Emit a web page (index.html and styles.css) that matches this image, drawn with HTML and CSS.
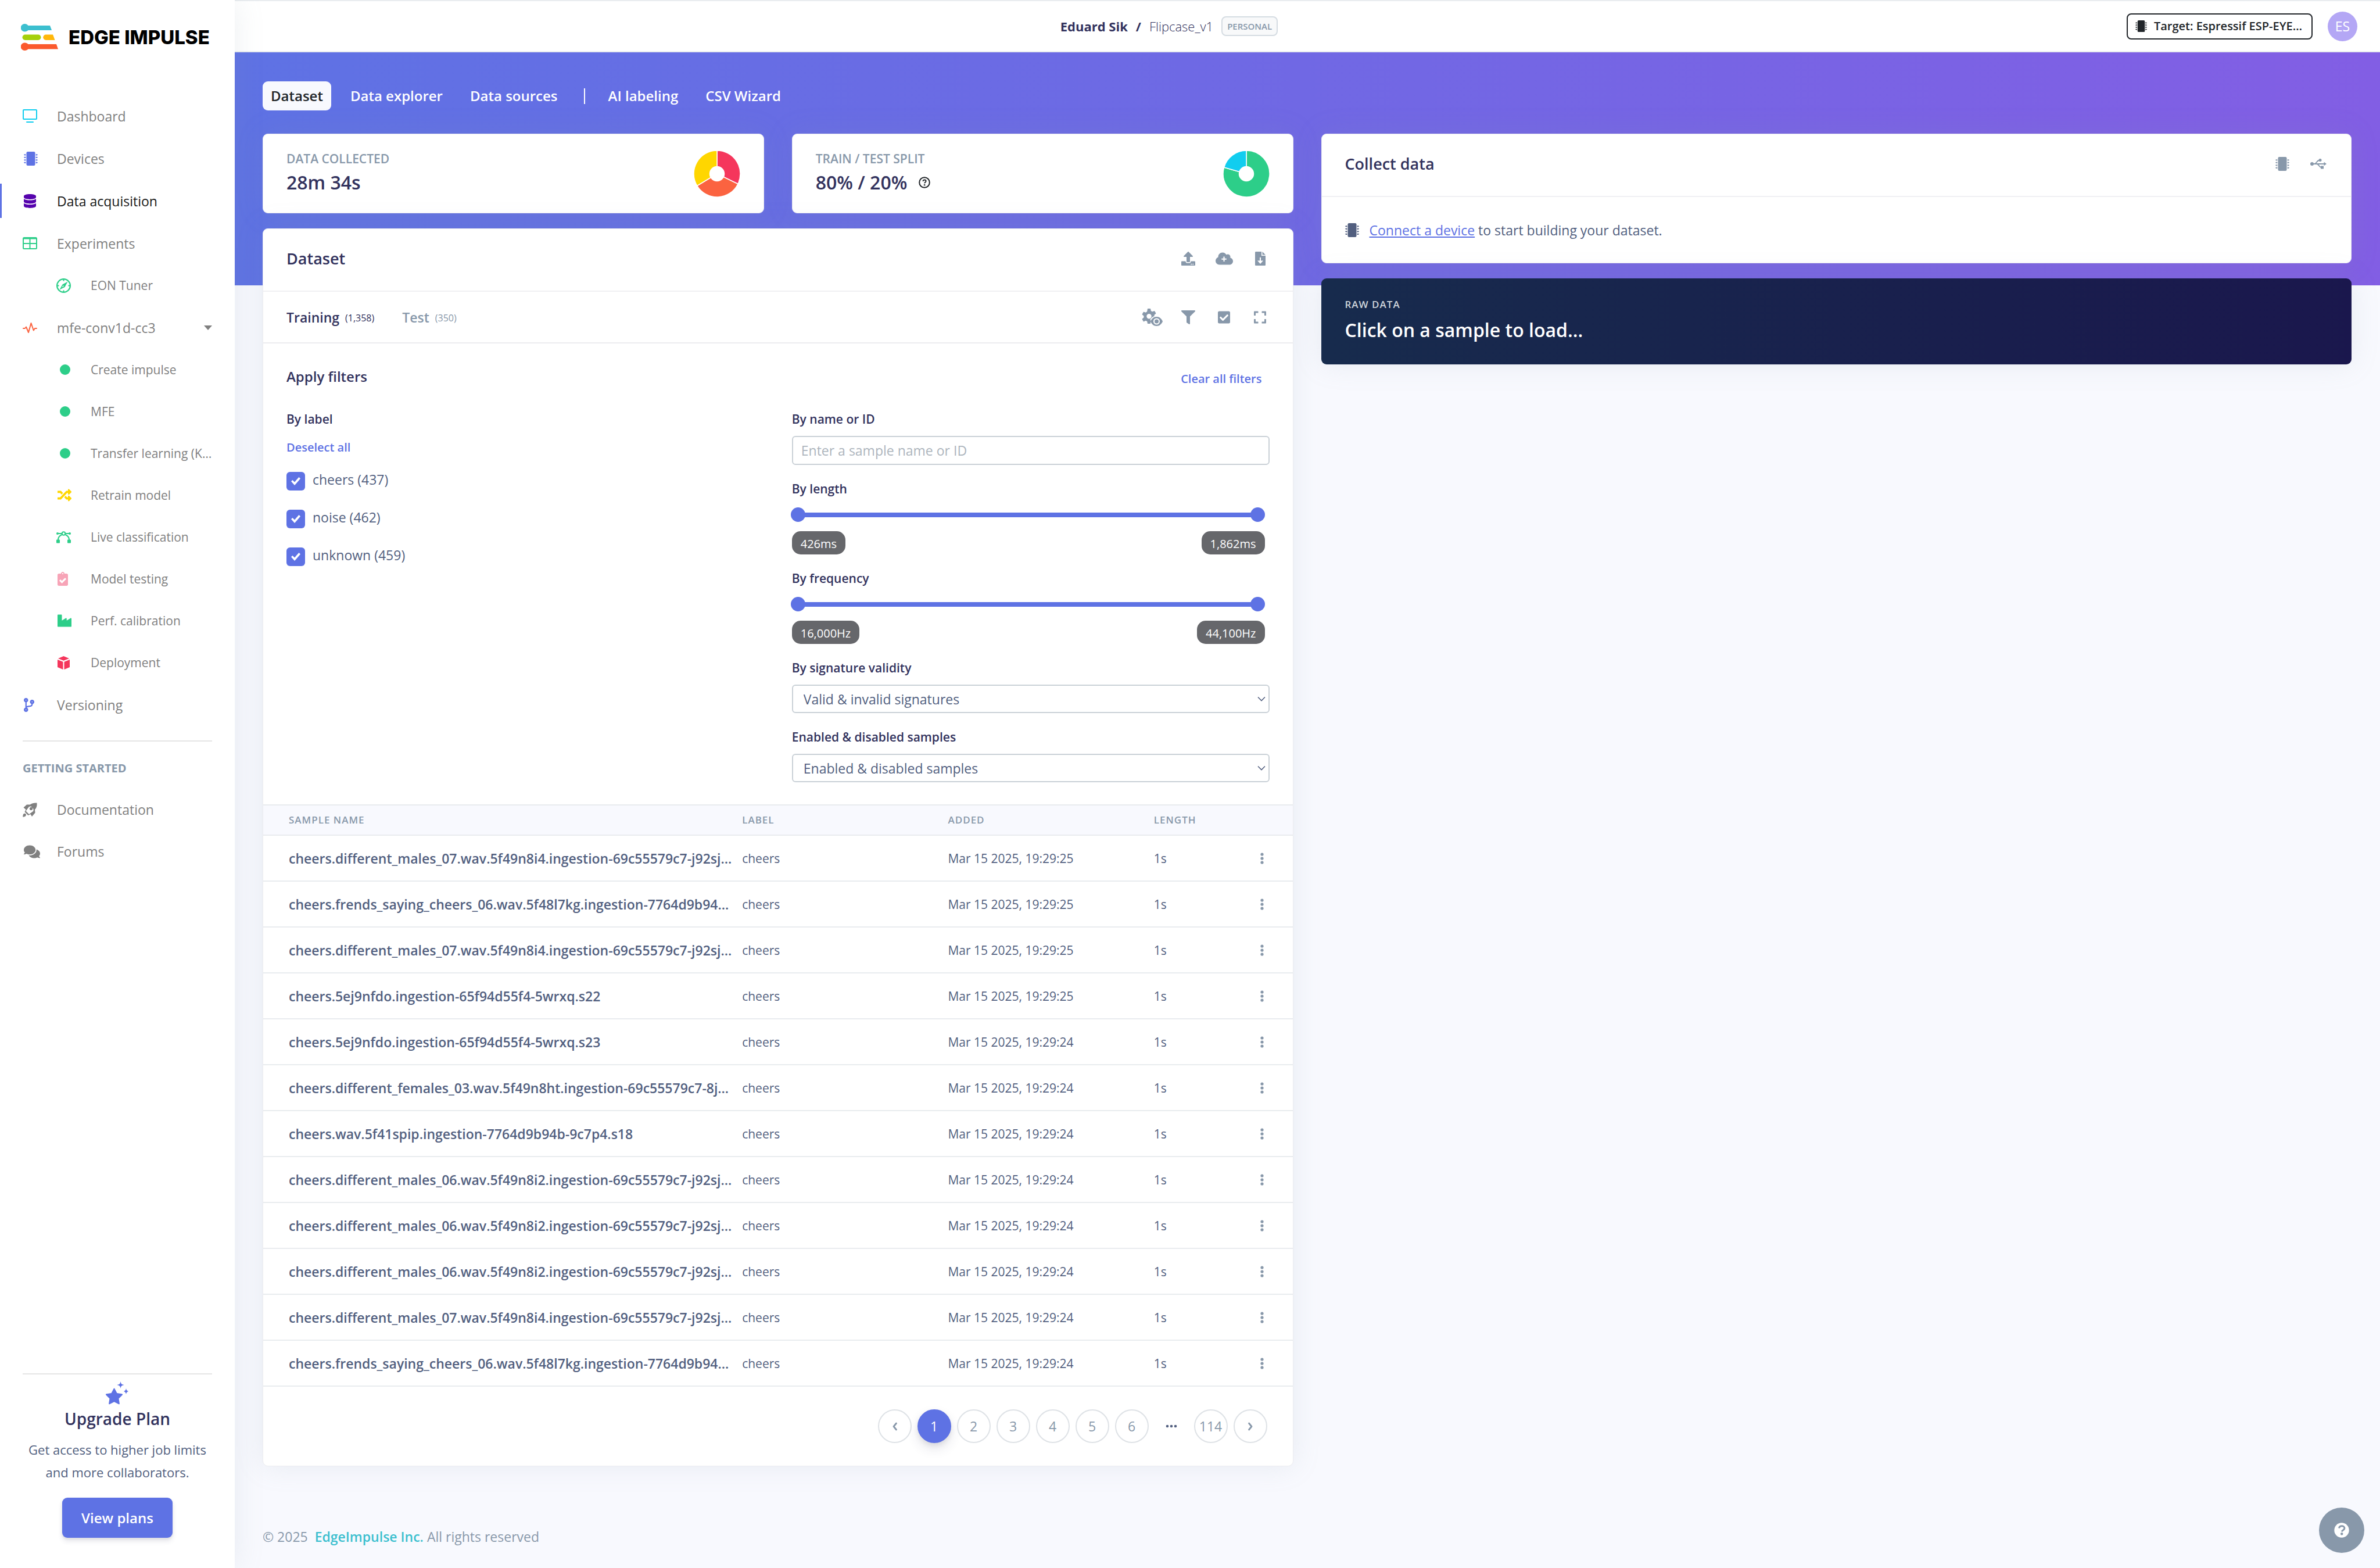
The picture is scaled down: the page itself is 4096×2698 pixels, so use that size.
FILE: index.html
```html
<!DOCTYPE html>
<html lang="en">
<head>
<meta charset="utf-8">
<title>Flipcase_v1 - Data acquisition - Edge Impulse</title>
<link rel="stylesheet" href="styles.css">
</head>
<body>
<svg class="sprite" aria-hidden="true">
  <symbol id="i-chip" viewBox="0 0 512 512"><rect x="96" width="320" height="512" rx="48"/><path d="M440 88h42a6 6 0 0 1 6 6v6h18a6 6 0 0 1 6 6v12a6 6 0 0 1-6 6h-18v6a6 6 0 0 1-6 6h-42zM440 184h42a6 6 0 0 1 6 6v6h18a6 6 0 0 1 6 6v12a6 6 0 0 1-6 6h-18v6a6 6 0 0 1-6 6h-42zM440 280h42a6 6 0 0 1 6 6v6h18a6 6 0 0 1 6 6v12a6 6 0 0 1-6 6h-18v6a6 6 0 0 1-6 6h-42zM440 376h42a6 6 0 0 1 6 6v6h18a6 6 0 0 1 6 6v12a6 6 0 0 1-6 6h-18v6a6 6 0 0 1-6 6h-42zM72 88H30a6 6 0 0 0-6 6v6H6a6 6 0 0 0-6 6v12a6 6 0 0 0 6 6h18v6a6 6 0 0 0 6 6h42zM72 184H30a6 6 0 0 0-6 6v6H6a6 6 0 0 0-6 6v12a6 6 0 0 0 6 6h18v6a6 6 0 0 0 6 6h42zM72 280H30a6 6 0 0 0-6 6v6H6a6 6 0 0 0-6 6v12a6 6 0 0 0 6 6h18v6a6 6 0 0 0 6 6h42zM72 376H30a6 6 0 0 0-6 6v6H6a6 6 0 0 0-6 6v12a6 6 0 0 0 6 6h18v6a6 6 0 0 0 6 6h42z"/></symbol>
  <symbol id="i-dots" viewBox="0 0 6 20"><circle cx="3" cy="3" r="2.600"/><circle cx="3" cy="10" r="2.600"/><circle cx="3" cy="17" r="2.600"/></symbol>
  <symbol id="i-chevron" viewBox="0 0 14 10"><path d="M1 1.500l6 6 6-6" fill="none" stroke="currentColor" stroke-width="1.600"/></symbol>
</svg>

<div class="app">
  <aside class="sidebar">
    <a class="logo" href="#">
      <svg width="64" height="46" viewBox="0 0 64 46" aria-hidden="true">
        <path d="M6.500 0C9 0 11 1 12.500 3H50l3 8H12.500C11 12.500 9 13.500 6.500 13.500a6.700 6.700 0 0 1 0-13.500z" fill="#3cbfcf"/>
        <rect x="2.500" y="18.500" width="32" height="9.500" rx="4.700" fill="#a5d00b"/>
        <path d="M43 18.500h12l3.500 9.500H43a4.700 4.700 0 0 1 0-9.500z" fill="#ffb70a"/>
        <path d="M6.500 32.500c2.500 0 4.500 1 6 2.500H61l3 8.500H12.500C11 45 9 46 6.500 46a6.700 6.700 0 0 1 0-13.500z" fill="#fb5a2d"/>
      </svg>
      <span>EDGE IMPULSE</span>
    </a>

    <nav class="nav" aria-label="Project">
      <a class="nav-item" href="#"><span class="nav-icon"><svg width="25" height="23" viewBox="0 0 25 23" fill="none" stroke="#11cdef" stroke-width="2"><rect x="1" y="1" width="23" height="16" rx="1"/><path d="M7 22h11" stroke-linecap="round"/></svg></span>Dashboard</a>
      <a class="nav-item" href="#"><span class="nav-icon shift c-indigo"><svg width="24" height="24"><use href="#i-chip"/></svg></span>Devices</a>
      <a class="nav-item active" href="#" aria-current="page"><span class="nav-icon shift"><svg width="21" height="24" viewBox="0 0 448 512" fill="#5603ad"><path d="M448 73v46c0 40-100 73-224 73S0 159 0 119V73C0 33 100 0 224 0s224 33 224 73zM448 176v103c0 40-100 73-224 73S0 319 0 279V176c48 33 136 49 224 49s176-16 224-49zM448 336v103c0 40-100 73-224 73S0 479 0 439V336c48 33 136 49 224 49s176-16 224-49z"/></svg></span>Data acquisition</a>
      <a class="nav-item" href="#"><span class="nav-icon"><svg width="25" height="21" viewBox="0 0 25 21" fill="none" stroke="#2dce89" stroke-width="2"><rect x="1" y="1" width="23" height="19" rx="1.500"/><path d="M12.500 1v19M1 11h23M1 2.500h23"/></svg></span>Experiments</a>
      <a class="nav-item sub" href="#"><span class="nav-icon"><svg width="25" height="25" viewBox="0 0 25 25"><circle cx="12.500" cy="12.500" r="11.400" fill="none" stroke="#2dce89" stroke-width="2.200"/><path d="M12.500 1v3.500M12.500 20.500V24M1 12.500h3.500M20.500 12.500H24" stroke="#2dce89" stroke-width="2"/><path fill="#2dce89" fill-rule="evenodd" d="M19.500 5.500l-5 9.500-9 4.500 5-9zM11.500 12l-2 3.500 3.500-2z"/></svg></span>EON Tuner</a>
      <a class="nav-item" href="#"><span class="nav-icon"><svg width="25" height="20" viewBox="0 0 25 20" fill="none" stroke="#fb6340" stroke-width="2" stroke-linejoin="round" stroke-linecap="round"><path d="M1 11h3l2-2.500 4 9.500L14.500 2l4.300 12.500L21 11h3"/></svg></span>mfe-conv1d-cc3<span class="caret"></span></a>
      <a class="nav-item sub" href="#"><span class="nav-icon dot"></span>Create impulse</a>
      <a class="nav-item sub" href="#"><span class="nav-icon dot"></span>MFE</a>
      <a class="nav-item sub" href="#"><span class="nav-icon dot"></span>Transfer learning (K…</a>
      <a class="nav-item sub" href="#"><span class="nav-icon shift"><svg width="24" height="24" viewBox="0 0 512 512" fill="#ffd600"><path d="M504.971 359.029c9.373 9.373 9.373 24.569 0 33.941l-80 79.984c-15.010 15.010-40.971 4.490-40.971-16.971V416h-58.785a12.004 12.004 0 0 1-8.773-3.812l-70.556-75.596 53.333-57.143L352 336h32v-39.981c0-21.438 25.943-31.998 40.971-16.971l80 79.981zM12 176h84l52.781 56.551 53.333-57.143-70.556-75.596A11.999 11.999 0 0 0 122.785 96H12c-6.627 0-12 5.373-12 12v56c0 6.627 5.373 12 12 12zm372 0v39.984c0 21.460 25.961 31.980 40.971 16.971l80-79.984c9.373-9.373 9.373-24.569 0-33.941l-80-79.981C409.943 24.021 384 34.582 384 56.019V96h-58.785a12.004 12.004 0 0 0-8.773 3.812L96 336H12c-6.627 0-12 5.373-12 12v56c0 6.627 5.373 12 12 12h110.785c3.326 0 6.503-1.381 8.773-3.812L352 176h32z"/></svg></span>Retrain model</a>
      <a class="nav-item sub" href="#"><span class="nav-icon"><svg width="25" height="21" viewBox="0 0 25 21" fill="none" stroke="#2dce89"><circle cx="12.500" cy="4" r="2.800" stroke-width="2"/><path d="M3 4h6.500M15.500 4H22M3 15C3 10 6 7.500 9.500 6M22 15c0-5-3-7.500-6.500-9" stroke-width="2"/><g fill="#2dce89" stroke="none"><circle cx="2" cy="4" r="2"/><circle cx="23" cy="4" r="2"/><rect y="14.500" width="6" height="6" rx="1"/><rect x="19" y="14.500" width="6" height="6" rx="1"/></g></svg></span>Live classification</a>
      <a class="nav-item sub" href="#"><span class="nav-icon shift"><svg width="18" height="24" viewBox="0 0 384 512" fill="#f7a4b7"><path fill-rule="evenodd" d="M336 64h-80c0-35.300-28.700-64-64-64s-64 28.700-64 64H48C21.500 64 0 85.500 0 112v352c0 26.500 21.500 48 48 48h288c26.500 0 48-21.500 48-48V112c0-26.500-21.500-48-48-48zM192 40c13.300 0 24 10.700 24 24s-10.700 24-24 24-24-10.700-24-24 10.700-24 24-24zm121.200 231.800l-143 141.800c-4.700 4.700-12.300 4.600-17-.1l-82.600-83.300c-4.700-4.700-4.600-12.300.1-17L99.100 285c4.700-4.700 12.300-4.600 17 .1l46 46.400 106-105.200c4.700-4.700 12.300-4.600 17 .1l28.200 28.400c4.700 4.800 4.600 12.300-.1 17z"/></svg></span>Model testing</a>
      <a class="nav-item sub" href="#"><span class="nav-icon shift"><svg width="24" height="24" viewBox="0 0 512 512" fill="#2dce89"><path d="M475.115 163.781L336 252.309v-68.280c0-18.916-20.931-30.399-36.885-20.248L160 252.309V56c0-13.255-10.745-24-24-24H24C10.745 32 0 42.745 0 56v400c0 13.255 10.745 24 24 24h464c13.255 0 24-10.745 24-24V184.029c0-18.917-20.931-30.399-36.885-20.248z"/></svg></span>Perf. calibration</a>
      <a class="nav-item sub" href="#"><span class="nav-icon shift"><svg width="21" height="23" viewBox="0 0 21 23" fill="#f5365c"><path d="M10.500 0L20 4l-9.500 3.800L1 4zM0 6l9.500 3.800V23L0 19zM21 6l-9.500 3.800V23L21 19z"/></svg></span>Deployment</a>
      <a class="nav-item" href="#"><span class="nav-icon shift"><svg width="18" height="24" viewBox="0 0 384 512" fill="#5e72e4"><path d="M384 144c0-44.200-35.800-80-80-80s-80 35.800-80 80c0 36.400 24.300 67.100 57.500 76.800-.6 16.100-4.200 28.500-11 36.900-15.400 19.200-49.300 22.400-85.200 25.700-28.200 2.600-57.400 5.400-81.300 16.900v-144c32.500-10.200 56-40.500 56-76.300 0-44.200-35.800-80-80-80S0 35.800 0 80c0 35.800 23.500 66.100 56 76.300v199.300C23.500 365.900 0 396.200 0 432c0 44.200 35.800 80 80 80s80-35.800 80-80c0-34-21.200-63.100-51.200-74.600 3.100-5.200 7.800-9.800 14.900-13.400 16.200-8.200 40.400-10.400 66.100-12.800 42.200-3.900 90-8.400 118.200-43.400 14-17.400 21.100-39.800 21.600-67.900 31.600-10.800 54.400-40.700 54.400-75.900zM80 64c8.800 0 16 7.200 16 16s-7.200 16-16 16-16-7.200-16-16 7.200-16 16-16zm0 384c-8.800 0-16-7.200-16-16s7.200-16 16-16 16 7.200 16 16-7.200 16-16 16zm224-320c8.800 0 16 7.200 16 16s-7.200 16-16 16-16-7.200-16-16 7.200-16 16-16z"/></svg></span>Versioning</a>
    </nav>

    <hr class="rule">
    <h6 class="nav-heading">GETTING STARTED</h6>
    <nav aria-label="Getting started">
      <a class="nav-item short" href="#"><span class="nav-icon"><svg width="25" height="25" viewBox="0 0 25 25" fill="#808080"><path fill-rule="evenodd" d="M24.500.5c.5 5-.5 8.500-3.500 11.500l.5 5.500-5.500 6.500-2.500-4-4 2-6-6 2-4-4-3.500L7 3.500l5.500 0C16 1 20 0 24.500.5zM11 7l-5.500 7.500 5.500 5.500 7.500-5.500 0-3.500-4-4.500zM14.500 7.800a2.600 2.600 0 1 0 0 5.200 2.600 2.600 0 0 0 0-5.200z"/><path d="M.3 24.700c0-4 1-6 3.200-5.900 2 .1 2.800 1.700 2.200 3.300C5 24 3 24.500.3 24.700z"/></svg></span>Documentation</a>
      <a class="nav-item short" href="#"><span class="nav-icon shift"><svg width="28" height="25" viewBox="0 0 576 512" fill="#808080"><path d="M416 192c0-88.400-93.100-160-208-160S0 103.600 0 192c0 34.300 14.100 65.900 38 92-13.400 30.200-35.500 54.200-35.800 54.500-2.200 2.300-2.800 5.700-1.500 8.700S4.800 352 8 352c36.600 0 66.900-12.300 88.700-25 32.200 15.700 70.300 25 111.300 25 114.900 0 208-71.600 208-160zm122 220c23.900-26 38-57.700 38-92 0-66.900-53.500-124.200-129.300-148.100.9 6.600 1.300 13.300 1.300 20.100 0 105.900-107.700 192-240 192-10.800 0-21.300-.8-31.700-1.900C207.800 439.600 281.800 480 368 480c41 0 79.100-9.200 111.300-25 21.800 12.700 52.100 25 88.700 25 3.200 0 6.100-1.900 7.300-4.800 1.300-2.900.7-6.300-1.500-8.700-.3-.3-22.400-24.200-35.800-54.500z"/></svg></span>Forums</a>
    </nav>

    <section class="upgrade">
      <svg width="40" height="40" viewBox="0 0 40 40" fill="#5e72e4" aria-hidden="true"><path d="M13.500 12.500c.6-1.300 1.400-1.300 2 0l4 7.500 8.200 1.200c1.500.2 1.900 1.200.8 2.300l-6 6 1.300 8.200c.2 1.500-.6 2-1.900 1.400l-7.400-3.800-7.400 3.800c-1.300.6-2.100.1-1.900-1.400L6.500 29.500l-6-6c-1.100-1.100-.7-2.100.8-2.300L9.500 20zM25.500 0c.8 4 1.500 5 6 6-4.500 1-5.200 2-6 6-.8-4-1.500-5-6-6 4.500-1 5.200-2 6-6zM35 12c.7 3.200 1.300 4 4.500 5-3.200 1-3.800 1.800-4.500 5-.7-3.200-1.300-4-4.500-5 3.200-1 3.800-1.800 4.500-5z"/></svg>
      <h4>Upgrade Plan</h4>
      <p>Get access to higher job limits and more collaborators.</p>
      <button class="btn-primary" type="button">View plans</button>
    </section>
  </aside>

  <div class="page">
    <header class="topbar">
      <div class="crumbs"><strong>Eduard Sik</strong><strong>/</strong><span>Flipcase_v1</span><span class="badge">PERSONAL</span></div>
      <div class="account">
        <button class="target" type="button"><svg width="20" height="20"><use href="#i-chip"/></svg>Target: Espressif ESP-EYE…</button>
        <a class="avatar" href="#">ES</a>
      </div>
    </header>

    <main class="main">
      <nav class="tabs" aria-label="Data">
        <a class="tab current" href="#">Dataset</a>
        <a class="tab" href="#">Data explorer</a>
        <a class="tab" href="#">Data sources</a>
        <span class="tab-split"></span>
        <a class="tab" href="#">AI labeling</a>
        <a class="tab" href="#">CSV Wizard</a>
      </nav>

      <div class="columns">
        <div class="stack">
          <div class="stats">
            <section class="card stat">
              <div><h5>DATA COLLECTED</h5><p>28m 34s</p></div>
              <svg width="80" height="80" viewBox="-40 -40 80 80" stroke="#fff" stroke-width="1.500" aria-hidden="true"><path fill="#f5365c" d="M0 0V-40A40 40 0 0 1 36 17.500z"/><path fill="#fb6340" d="M0 0L36 17.500A40 40 0 0 1-34.300 20.600z"/><path fill="#ffd600" d="M0 0L-34.300 20.600A40 40 0 0 1 0-40z"/><circle r="12.500" fill="#fff"/></svg>
            </section>
            <section class="card stat">
              <div><h5>TRAIN / TEST SPLIT</h5><p>80% / 20% <svg width="20" height="20" viewBox="0 0 20 20" aria-label="Help"><circle cx="10" cy="10" r="8.800" fill="none" stroke="#212529" stroke-width="2"/><path d="M7.500 8c0-1.600 1.100-2.500 2.600-2.500s2.500.9 2.500 2.200c0 1.800-2.300 1.900-2.400 3.800" fill="none" stroke="#212529" stroke-width="1.900"/><circle cx="10.100" cy="14.200" r="1.300" fill="#212529"/></svg></p></div>
              <svg width="80" height="80" viewBox="-40 -40 80 80" stroke="#fff" stroke-width="1.500" aria-hidden="true"><path fill="#2dce89" d="M0 0V-40A40 40 0 1 1-38.400-11z"/><path fill="#11cdef" d="M0 0L-38.400-11A40 40 0 0 1 0-40z"/><circle r="12.500" fill="#fff"/></svg>
            </section>
          </div>

          <section class="card dataset">
            <header class="card-head">
              <h3>Dataset</h3>
              <div class="tools">
                <button type="button" aria-label="Upload data"><svg width="24" height="24" viewBox="0 0 512 512"><path fill-rule="evenodd" d="M296 384h-80c-13.300 0-24-10.700-24-24V192h-87.700c-17.800 0-26.700-21.500-14.100-34.100L242.300 5.700c7.500-7.500 19.800-7.500 27.300 0l152.200 152.200c12.600 12.600 3.700 34.100-14.100 34.100H320v168c0 13.300-10.700 24-24 24zm216-8v112c0 13.300-10.700 24-24 24H24c-13.300 0-24-10.700-24-24V376c0-13.300 10.700-24 24-24h136v8c0 30.900 25.100 56 56 56h80c30.900 0 56-25.100 56-56v-8h136c13.300 0 24 10.700 24 24zm-124 88c0-11-9-20-20-20s-20 9-20 20 9 20 20 20 20-9 20-20zm64 0c0-11-9-20-20-20s-20 9-20 20 9 20 20 20 20-9 20-20z"/></svg></button>
                <button type="button" aria-label="Add from cloud"><svg width="30" height="24" viewBox="0 0 640 512"><path d="M537.600 226.600c4.100-10.700 6.400-22.400 6.400-34.600 0-53-43-96-96-96-19.700 0-38.100 6-53.300 16.200C367 64.200 315.300 32 256 32c-88.400 0-160 71.600-160 160 0 2.700.1 5.400.2 8.100C40.200 219.800 0 273.200 0 336c0 79.500 64.500 144 144 144h368c70.700 0 128-57.300 128-128 0-61.900-44-113.600-102.400-125.400z"/><path d="M310 180v180M220 270h180" stroke="#fff" stroke-width="44"/></svg></button>
                <button type="button" aria-label="Export data"><svg width="18" height="24" viewBox="0 0 18 24"><path d="M1.500 0H11v7h7v15.500c0 1-.5 1.500-1.500 1.500h-15C.5 24 0 23.500 0 22.500v-21C0 .5.500 0 1.500 0zM12.500 0L18 5.500h-5.500z"/><path d="M9 10v8" stroke="#fff" stroke-width="2"/><path d="M4 15.500h10L9 21z" fill="#fff"/></svg></button>
              </div>
            </header>

            <div class="subhead">
              <div class="splits">
                <a class="split current" href="#">Training <small>(1,358)</small></a>
                <a class="split" href="#">Test <small>(350)</small></a>
              </div>
              <div class="tools">
                <button type="button" aria-label="Columns"><svg width="36" height="30" viewBox="0 0 36 30"><path fill-rule="evenodd" d="M10 0h5l.8 4 2.300 1.300L22 4l2.500 4.300-3 2.700v2c-3 1-5.500 3-7 6l1 2.500-.7 4.500H10l-.8-4-2.300-1.300L3 22.500.5 18l3-2.700v-2.600l-3-2.700L3 5.500l3.900 1.300L9.200 5zM12.500 9a4.200 4.200 0 1 0 0 8.400 4.200 4.200 0 0 0 0-8.400z"/><path fill-rule="evenodd" d="M25.500 14c5 0 8.500 3.500 10.500 8-2 4.500-5.500 8-10.500 8S17 26.500 15 22c2-4.500 5.500-8 10.500-8zm0 2.500a5.500 5.500 0 1 0 0 11 5.500 5.500 0 0 0 0-11z"/><circle cx="25.500" cy="22" r="3.500"/></svg></button>
                <button type="button" aria-label="Filter"><svg width="24" height="24" viewBox="0 0 512 512"><path d="M487.976 0H24.028C2.710 0-8.047 25.866 7.058 40.971L192 225.941V432c0 7.831 3.821 15.170 10.237 19.662l80 55.980C298.020 518.690 320 507.493 320 487.980V225.941l184.947-184.970C520.021 25.896 509.338 0 487.976 0z"/></svg></button>
                <button type="button" aria-label="Select samples"><svg width="21" height="24" viewBox="0 0 448 512"><path fill-rule="evenodd" d="M400 480H48c-26.510 0-48-21.490-48-48V80c0-26.510 21.490-48 48-48h352c26.510 0 48 21.490 48 48v352c0 26.510-21.490 48-48 48zm-204.686-98.059l184-184c6.248-6.248 6.248-16.379 0-22.627l-22.627-22.627c-6.248-6.248-16.379-6.249-22.628 0L184 302.745l-70.059-70.059c-6.248-6.248-16.379-6.248-22.628 0l-22.627 22.627c-6.248 6.248-6.248 16.379 0 22.627l104 104c6.249 6.250 16.379 6.250 22.628.001z"/></svg></button>
                <button type="button" aria-label="Expand"><svg width="21" height="24" viewBox="0 0 448 512"><path d="M0 180V56c0-13.300 10.700-24 24-24h124c6.600 0 12 5.400 12 12v40c0 6.600-5.400 12-12 12H64v84c0 6.600-5.400 12-12 12H12c-6.600 0-12-5.400-12-12zM288 44v40c0 6.600 5.400 12 12 12h84v84c0 6.600 5.400 12 12 12h40c6.600 0 12-5.400 12-12V56c0-13.300-10.700-24-24-24H300c-6.600 0-12 5.400-12 12zm148 276h-40c-6.600 0-12 5.400-12 12v84h-84c-6.600 0-12 5.400-12 12v40c0 6.600 5.400 12 12 12h124c13.300 0 24-10.700 24-24V332c0-6.600-5.400-12-12-12zM160 468v-40c0-6.600-5.400-12-12-12H64v-84c0-6.600-5.400-12-12-12H12c-6.600 0-12 5.400-12 12v124c0 13.300 10.700 24 24 24h124c6.600 0 12-5.400 12-12z"/></svg></button>
              </div>
            </div>

            <form class="filters">
              <div class="filters-head"><h4>Apply filters</h4><button class="link-btn" type="button">Clear all filters</button></div>
              <div class="filters-grid">
                <fieldset class="labels">
                  <legend class="field-label">By label</legend>
                  <button class="link-btn" type="button">Deselect all</button>
                  <label class="check"><input type="checkbox" checked><span>cheers (437)</span></label>
                  <label class="check"><input type="checkbox" checked><span>noise (462)</span></label>
                  <label class="check"><input type="checkbox" checked><span>unknown (459)</span></label>
                </fieldset>
                <div class="fields">
                  <div class="field">
                    <label class="field-label" for="f-name">By name or ID</label>
                    <input class="control" id="f-name" type="text" placeholder="Enter a sample name or ID">
                  </div>
                  <div class="field range-field">
                    <label class="field-label" for="f-len-min">By length</label>
                    <div class="range">
                      <input id="f-len-min" type="range" min="426" max="1862" value="426">
                      <input type="range" min="426" max="1862" value="1862" aria-label="Maximum length">
                    </div>
                    <div class="range-values"><output>426ms</output><output>1,862ms</output></div>
                  </div>
                  <div class="field range-field">
                    <label class="field-label" for="f-freq-min">By frequency</label>
                    <div class="range">
                      <input id="f-freq-min" type="range" min="16000" max="44100" value="16000">
                      <input type="range" min="16000" max="44100" value="44100" aria-label="Maximum frequency">
                    </div>
                    <div class="range-values"><output>16,000Hz</output><output>44,100Hz</output></div>
                  </div>
                  <div class="field">
                    <label class="field-label" for="f-sig">By signature validity</label>
                    <div class="select"><select class="control" id="f-sig"><option>Valid &amp; invalid signatures</option></select><svg width="14" height="10"><use href="#i-chevron"/></svg></div>
                  </div>
                  <div class="field">
                    <label class="field-label" for="f-enabled">Enabled &amp; disabled samples</label>
                    <div class="select"><select class="control" id="f-enabled"><option>Enabled &amp; disabled samples</option></select><svg width="14" height="10"><use href="#i-chevron"/></svg></div>
                  </div>
                </div>
              </div>
            </form>

            <table class="samples">
              <colgroup><col class="c-name"><col class="c-mid"><col class="c-mid"><col class="c-len"><col></colgroup>
              <thead><tr><th>SAMPLE NAME</th><th>LABEL</th><th>ADDED</th><th>LENGTH</th><th></th></tr></thead>
              <tbody>
                <tr><td>cheers.different_males_07.wav.5f49n8i4.ingestion-69c55579c7-j92sj…</td><td>cheers</td><td>Mar 15 2025, 19:29:25</td><td>1s</td><td><button type="button" aria-label="Actions"><svg width="6" height="20"><use href="#i-dots"/></svg></button></td></tr>
                <tr><td>cheers.frends_saying_cheers_06.wav.5f48l7kg.ingestion-7764d9b94…</td><td>cheers</td><td>Mar 15 2025, 19:29:25</td><td>1s</td><td><button type="button" aria-label="Actions"><svg width="6" height="20"><use href="#i-dots"/></svg></button></td></tr>
                <tr><td>cheers.different_males_07.wav.5f49n8i4.ingestion-69c55579c7-j92sj…</td><td>cheers</td><td>Mar 15 2025, 19:29:25</td><td>1s</td><td><button type="button" aria-label="Actions"><svg width="6" height="20"><use href="#i-dots"/></svg></button></td></tr>
                <tr><td>cheers.5ej9nfdo.ingestion-65f94d55f4-5wrxq.s22</td><td>cheers</td><td>Mar 15 2025, 19:29:25</td><td>1s</td><td><button type="button" aria-label="Actions"><svg width="6" height="20"><use href="#i-dots"/></svg></button></td></tr>
                <tr><td>cheers.5ej9nfdo.ingestion-65f94d55f4-5wrxq.s23</td><td>cheers</td><td>Mar 15 2025, 19:29:24</td><td>1s</td><td><button type="button" aria-label="Actions"><svg width="6" height="20"><use href="#i-dots"/></svg></button></td></tr>
                <tr><td>cheers.different_females_03.wav.5f49n8ht.ingestion-69c55579c7-8j…</td><td>cheers</td><td>Mar 15 2025, 19:29:24</td><td>1s</td><td><button type="button" aria-label="Actions"><svg width="6" height="20"><use href="#i-dots"/></svg></button></td></tr>
                <tr><td>cheers.wav.5f41spip.ingestion-7764d9b94b-9c7p4.s18</td><td>cheers</td><td>Mar 15 2025, 19:29:24</td><td>1s</td><td><button type="button" aria-label="Actions"><svg width="6" height="20"><use href="#i-dots"/></svg></button></td></tr>
                <tr><td>cheers.different_males_06.wav.5f49n8i2.ingestion-69c55579c7-j92sj…</td><td>cheers</td><td>Mar 15 2025, 19:29:24</td><td>1s</td><td><button type="button" aria-label="Actions"><svg width="6" height="20"><use href="#i-dots"/></svg></button></td></tr>
                <tr><td>cheers.different_males_06.wav.5f49n8i2.ingestion-69c55579c7-j92sj…</td><td>cheers</td><td>Mar 15 2025, 19:29:24</td><td>1s</td><td><button type="button" aria-label="Actions"><svg width="6" height="20"><use href="#i-dots"/></svg></button></td></tr>
                <tr><td>cheers.different_males_06.wav.5f49n8i2.ingestion-69c55579c7-j92sj…</td><td>cheers</td><td>Mar 15 2025, 19:29:24</td><td>1s</td><td><button type="button" aria-label="Actions"><svg width="6" height="20"><use href="#i-dots"/></svg></button></td></tr>
                <tr><td>cheers.different_males_07.wav.5f49n8i4.ingestion-69c55579c7-j92sj…</td><td>cheers</td><td>Mar 15 2025, 19:29:24</td><td>1s</td><td><button type="button" aria-label="Actions"><svg width="6" height="20"><use href="#i-dots"/></svg></button></td></tr>
                <tr><td>cheers.frends_saying_cheers_06.wav.5f48l7kg.ingestion-7764d9b94…</td><td>cheers</td><td>Mar 15 2025, 19:29:24</td><td>1s</td><td><button type="button" aria-label="Actions"><svg width="6" height="20"><use href="#i-dots"/></svg></button></td></tr>
              </tbody>
            </table>

            <nav class="pagination" aria-label="Pages">
              <a href="#" aria-label="Previous"><svg width="10" height="15" viewBox="0 0 10 15"><path d="M7.500 2L3 7.500 7.500 13" fill="none" stroke="currentColor" stroke-width="2.800" stroke-linecap="round" stroke-linejoin="round"/></svg></a>
              <a class="current" href="#" aria-current="page">1</a>
              <a href="#">2</a>
              <a href="#">3</a>
              <a href="#">4</a>
              <a href="#">5</a>
              <a href="#">6</a>
              <span class="more"><svg width="20" height="6" viewBox="0 0 20 6" fill="currentColor"><circle cx="3" cy="3" r="2.300"/><circle cx="10" cy="3" r="2.300"/><circle cx="17" cy="3" r="2.300"/></svg></span>
              <a href="#">114</a>
              <a href="#" aria-label="Next"><svg width="10" height="15" viewBox="0 0 10 15"><path d="M2.500 2L7 7.500 2.500 13" fill="none" stroke="currentColor" stroke-width="2.800" stroke-linecap="round" stroke-linejoin="round"/></svg></a>
            </nav>
          </section>
        </div>

        <div class="stack">
          <section class="card">
            <header class="card-head">
              <h3>Collect data</h3>
              <div class="tools">
                <button type="button" aria-label="Devices"><svg width="24" height="24"><use href="#i-chip"/></svg></button>
                <button type="button" aria-label="Connect using WebUSB"><svg width="28" height="18" viewBox="0 0 28 18"><path d="M3 9h22M7 9c4 0 4-6 8-6h2M11 9c4 0 4 6 8 6h2" fill="none" stroke="currentColor" stroke-width="1.800"/><circle cx="3" cy="9" r="3"/><circle cx="17" cy="2.600" r="2.500"/><rect x="18" y="12.500" width="5" height="5" rx=".5"/><path d="M23.500 5.800L28 9l-4.500 3.200z"/></svg></button>
              </div>
            </header>
            <p class="connect"><svg width="24" height="24"><use href="#i-chip"/></svg><span><a href="#">Connect a device</a> to start building your dataset.</span></p>
          </section>
          <section class="raw">
            <h6>RAW DATA</h6>
            <h2>Click on a sample to load...</h2>
          </section>
        </div>
      </div>
    </main>

    <footer class="footer">© 2025 &nbsp;<a href="#">EdgeImpulse Inc.</a> All rights reserved</footer>
  </div>
</div>

<button class="help" type="button" aria-label="Help"><svg width="26" height="26" viewBox="0 0 26 26"><circle cx="13" cy="13" r="12.700" fill="#fff"/><path d="M8.500 9.500C9 7 10.500 5.800 13.200 5.800c2.800 0 4.700 1.500 4.700 3.700 0 3.300-4.200 3-4.500 6" fill="none" stroke="#8898aa" stroke-width="3"/><circle cx="13.200" cy="19.300" r="2.200" fill="#8898aa"/></svg></button>
</body>
</html>
```
FILE: styles.css
```css
* { box-sizing: border-box; }

body {
  margin: 0;
  background: #f8f9fe;
  color: #525f7f;
  font-family: "Open Sans", sans-serif;
  font-size: 23px;
  line-height: 36px;
}

h2, h3, h4, h5, h6, p { margin: 0; font-weight: 600; }
a { color: inherit; text-decoration: none; }
button { padding: 0; border: 0; background: none; color: inherit; font: inherit; cursor: pointer; }
svg { display: block; flex: none; }
.sprite { display: none; }

.app { display: grid; grid-template-columns: 404px 1fr; min-height: 100vh; }

/* Sidebar */
.sidebar {
  z-index: 1;
  display: flex;
  flex-direction: column;
  padding: 41px 0 52px;
  background: #fff;
  color: #808080;
  box-shadow: 0 0 48px rgba(136, 152, 170, .15);
}
.logo {
  display: flex;
  align-items: center;
  gap: 18px;
  margin-bottom: 76px;
  padding-left: 36px;
  color: #000;
  font: 800 33px/46px Inter, sans-serif;
}
.nav-item { display: flex; align-items: center; height: 73px; padding: 0 39px; white-space: nowrap; }
.nav-item.sub { height: 72px; padding-left: 97px; padding-right: 0; font-size: 21px; }
.nav-item.short { height: 72px; }
.nav-item.active { padding-left: 0; color: #191919; }
.nav-item.active::before { content: ""; width: 3px; height: 59px; margin-right: 36px; background: #5e72e4; }
.nav-icon { display: flex; flex: none; width: 59px; }
.nav-icon.shift { padding-left: 2px; }
.nav-icon.dot::before { content: ""; width: 18px; height: 18px; margin-left: 6px; border-radius: 50%; background: #2dce89; }
.c-indigo svg { fill: #5e72e4; }
.caret { margin-left: auto; border: 7px solid transparent; border-top: 8px solid #808080; border-bottom: 0; }
.rule { width: calc(100% - 78px); margin: 25px 39px 31px; border: 0; border-top: 2px solid #e5e5e5; }
.nav-heading { margin-bottom: 20px; padding-left: 39px; color: #8898aa; font-size: 20px; line-height: 30px; font-weight: 700; }
.upgrade {
  display: flex;
  flex-direction: column;
  align-items: center;
  margin: auto 39px 0;
  padding-top: 12px;
  border-top: 2px solid #e5e5e5;
  text-align: center;
}
.upgrade h4 { margin-top: 4px; color: #32325d; font-size: 28px; line-height: 40px; }
.upgrade p { margin: 14px 0 24px; color: #525f7f; font-size: 22px; line-height: 39px; font-weight: 400; }
.btn-primary {
  height: 69px;
  padding: 0 33px;
  border-radius: 9px;
  background: #5e72e4;
  color: #fff;
  font-size: 24px;
  font-weight: 600;
  box-shadow: 0 6px 9px rgba(50, 50, 93, .11), 0 2px 4px rgba(0, 0, 0, .08);
}

/* Top bar */
.page { display: flex; flex-direction: column; min-width: 0; }
.topbar { display: flex; height: 90px; padding-right: 39px; border-top: 2px solid #e9ecef; border-bottom: 2px solid #e9ecef; background: #fff; }
.crumbs { display: flex; flex: 1; align-items: center; justify-content: center; gap: 14px; color: #32325d; font-size: 22px; }
.crumbs strong { font-weight: 700; }
.crumbs span { font-weight: 300; }
.crumbs .badge { padding: 0 8px; border: 2px solid #d5dce2; border-radius: 8px; background: #f8f9fa; color: #8898aa; font-size: 15px; line-height: 30px; font-weight: 600; }
.account { display: flex; align-items: center; gap: 26px; padding-left: 40px; }
.target {
  display: flex;
  align-items: center;
  gap: 12px;
  height: 45px;
  padding: 0 16px 0 13px;
  border: 2px solid #212529;
  border-radius: 8px;
  color: #212529;
  font-size: 20px;
  font-weight: 600;
}
.avatar { width: 51px; border-radius: 50%; background: #b4a7f5; color: #fff; line-height: 51px; text-align: center; }

/* Main area */
.main {
  flex: 1;
  padding: 50px 49px 0 48px;
  background: linear-gradient(87deg, #5e72e4, #825ee4) no-repeat 0 0 / 100% 401px;
}
.tabs { display: flex; align-items: center; gap: 19px; margin-bottom: 40px; color: #fff; font-size: 24px; font-weight: 600; }
.tab { padding: 0 14px; border-radius: 9px; line-height: 50px; }
.tab.current { background: #f8f9fe; color: #212529; }
.tab-split { width: 2px; height: 27px; margin: 0 7px 0 12px; background: #fff; }
.columns { display: grid; grid-template-columns: minmax(0, 1fr) minmax(0, 1fr); gap: 48px; align-items: start; }
.stack { display: grid; gap: 26px; }
.card { border: 1px solid #ececf0; border-radius: 9px; background: #fff; box-shadow: 0 0 48px rgba(136, 152, 170, .15); }

.stats { display: grid; grid-template-columns: 1fr 1fr; gap: 48px; }
.stat { display: flex; align-items: center; justify-content: space-between; height: 137px; padding: 0 40px; }
.stat h5 { color: #8898aa; font-size: 21px; line-height: 36px; }
.stat p { display: flex; align-items: center; gap: 20px; margin-bottom: 6px; color: #32325d; font-size: 32px; line-height: 46px; }

.card-head { display: flex; align-items: center; justify-content: space-between; height: 108px; padding: 0 25px 4px 40px; border-bottom: 2px solid #f0f0f3; color: #32325d; }
.card-head h3 { font-size: 27px; line-height: 40px; }
.tools { display: flex; color: #8898aa; }
.tools button { display: flex; align-items: center; justify-content: center; width: 62px; }
.tools svg, .samples svg, .target svg { fill: currentColor; }

.subhead { display: flex; align-items: center; justify-content: space-between; height: 89px; padding: 0 25px 0 40px; border-bottom: 2px solid #ececef; }
.splits { display: flex; gap: 48px; color: #8898aa; font-weight: 600; }
.split { display: flex; align-items: center; gap: 10px; }
.split.current { color: #32325d; }
.split small { padding-top: 3px; font-size: 16px; font-weight: 400; }

/* Filters */
.filters { padding: 37px 40px 38px; color: #32325d; }
.filters-head { display: flex; justify-content: space-between; margin-bottom: 38px; padding-right: 13px; line-height: 40px; }
.filters-head h4 { font-size: 24px; }
.filters-head .link-btn { padding-top: 8px; }
.link-btn { color: #5e72e4; font-size: 20px; line-height: 28px; font-weight: 600; }
.filters-grid { display: grid; grid-template-columns: 1fr 1fr; gap: 48px; }
.field-label { display: block; padding: 0; font-size: 21px; line-height: 30px; font-weight: 600; }
.labels { min-width: 0; margin: 0; padding: 0; border: 0; }
.labels .link-btn { display: block; margin: 20px 0 28px; }
.check { display: flex; align-items: flex-start; gap: 13px; margin-bottom: 33px; color: #525f7f; line-height: 26px; }
.check input { display: flex; align-items: center; justify-content: center; width: 32px; height: 32px; margin: 0; border-radius: 6px; appearance: none; background: #fff; }
.check input:checked { background: #5e72e4; }
.check input:checked::before { content: ""; width: 16px; height: 14px; background: #fff; clip-path: polygon(0 52%, 15% 36%, 38% 60%, 84% 0, 100% 18%, 38% 100%); }
.fields { display: grid; gap: 26px; }
.field { display: grid; gap: 14px; }
.control {
  width: 100%;
  height: 50px;
  margin: 0;
  padding: 0 14px;
  border: 2px solid #cad1d7;
  border-radius: 6px;
  background: #fff;
  color: #525f7f;
  font: inherit;
}
.control::placeholder { color: #adb5bd; }
.select { display: grid; align-items: center; }
.select > * { grid-area: 1 / 1; }
.select .control { height: 49px; padding-left: 18px; appearance: none; }
.select svg { justify-self: end; margin-right: 7px; color: #525f7f; pointer-events: none; }
.range-field { gap: 0; padding-right: 8px; }
.range { display: grid; margin: 17px 0 16px -2px; }
.range input {
  grid-area: 1 / 1;
  width: 100%;
  height: 25px;
  margin: 0;
  appearance: none;
  background: linear-gradient(#5e72e4, #5e72e4) no-repeat center / calc(100% - 24px) 8px;
  pointer-events: none;
}
.range input::-webkit-slider-thumb { width: 25px; height: 25px; border-radius: 50%; appearance: none; background: #5e72e4; pointer-events: auto; }
.range-values { display: flex; justify-content: space-between; }
.range-values output { padding: 3px 15px 0; border-radius: 15px; background: #66676b; color: #fff; font-size: 20px; line-height: 37px; }

/* Samples table */
.samples { width: 100%; border-collapse: collapse; table-layout: fixed; }
.samples .c-name { width: 45%; }
.samples .c-mid { width: 20%; }
.samples .c-len { width: 10%; }
.samples th { height: 52px; padding: 0 0 0 27px; border: solid #e9ecef; border-width: 2px 0; background: #f8f9fe; color: #8898aa; font-size: 17px; line-height: 24px; font-weight: 600; letter-spacing: 1px; text-align: left; }
.samples td { height: 79px; padding: 0 0 0 27px; border-bottom: 2px solid #e9ecef; font-size: 21px; white-space: nowrap; }
.samples th:first-child, .samples td:first-child { padding-left: 44px; }
.samples td:first-child { font-size: 23px; font-weight: 600; }
.samples td:last-child { padding: 0 50px 0 0; }
.samples button { display: block; margin-left: auto; color: #8898aa; }

.pagination { display: flex; justify-content: flex-end; gap: 10px; padding: 39px 44px 39px; color: #8898aa; }
.pagination > * { display: flex; align-items: center; justify-content: center; width: 58px; height: 58px; border: 2px solid #dee2e6; border-radius: 50%; }
.pagination .current { border-color: #5e72e4; background: #5e72e4; color: #fff; box-shadow: 0 10px 20px rgba(50, 50, 93, .12), 0 4px 9px rgba(0, 0, 0, .08); }
.pagination .more { border-color: transparent; color: #525f7f; }

/* Right column */
.connect { display: flex; align-items: center; gap: 18px; height: 113px; padding: 0 40px; font-weight: 400; }
.connect svg { fill: #525f7f; }
.connect a { color: #5e72e4; text-decoration: underline; }
.raw { padding: 30px 41px 36px; border-radius: 9px; background: linear-gradient(87deg, #172b4d, #1a174d); color: #fff; box-shadow: 0 0 48px rgba(136, 152, 170, .15); }
.raw h6 { margin-bottom: 6px; color: #ced4da; font-size: 17px; line-height: 30px; letter-spacing: 1px; }
.raw h2 { font-size: 32px; line-height: 46px; }

.footer { padding: 0 48px 36px; color: #8898aa; }
.footer a { color: #3cbfcf; font-weight: 600; }

.help {
  position: fixed;
  right: 27px;
  bottom: 26px;
  display: flex;
  align-items: center;
  justify-content: center;
  width: 78px;
  height: 78px;
  border-radius: 50%;
  background: #8898aa;
}
```
